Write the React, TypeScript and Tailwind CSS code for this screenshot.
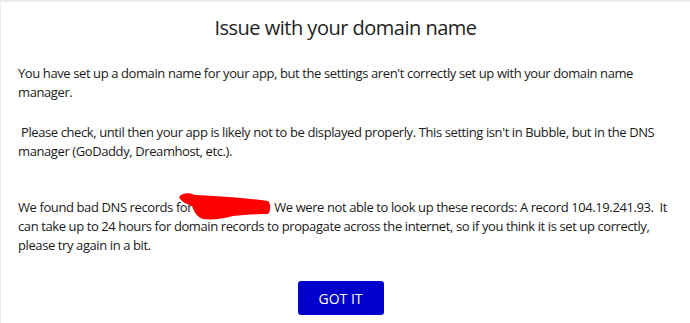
import React from 'react';

const Redaction: React.FC = () => (
    <span className="relative inline-block w-[76px] h-[14px] align-baseline">
        <svg className="absolute -left-[18px] -top-[6px]" width="96" height="30" viewBox="0 0 96 30" fill="none">
            <path
                d="M2 5 C4 1 12 0 18 3 C40 4 70 6 91 9 C94 12 94 19 91 22 C80 22 66 23 56 24 C46 27 34 28 26 27 C20 25 17 20 15 14 C10 12 4 10 2 5 Z"
                fill="#ff0000"
            />
        </svg>
    </span>
);

const App: React.FC = () => {
    return (
        <div className="w-[690px] h-[323px] bg-white border-t-2 border-l border-[#ebebf0] text-[#1a1a1a] overflow-hidden" style={{ fontFamily: '"Open Sans", sans-serif' }}>
            <h1 className="text-center text-[20px] leading-[28px] pt-[12px] tracking-[-0.5px] text-[#222]">Issue with your domain name</h1>
            <div className="px-[17px] pt-[22px] text-[13px] leading-[19px] tracking-[-0.4px]">
                <p>You have set up a domain name for your app, but the settings aren't correctly set up with your domain name manager.</p>
                <p className="mt-[21px]">&nbsp;Please check, until then your app is likely not to be displayed properly. This setting isn't in Bubble, but in the DNS manager (GoDaddy, Dreamhost, etc.).</p>
                <p className="mt-[37px]">
                    We found bad DNS records for <Redaction /> We were not able to look up these records: A record 104.19.241.93.&nbsp; It can take up to 24 hours for domain records to propagate across the internet, so if you think it is set up correctly, please try again in a bit.
                </p>
            </div>
            <div className="flex justify-center pr-[10px] pt-[26px]">
                <button type="button" className="w-[86px] h-[34px] bg-[#0000cc] text-white text-[14px] rounded-[3px]">
                    GOT IT
                </button>
            </div>
        </div>
    );
};

export default App;
